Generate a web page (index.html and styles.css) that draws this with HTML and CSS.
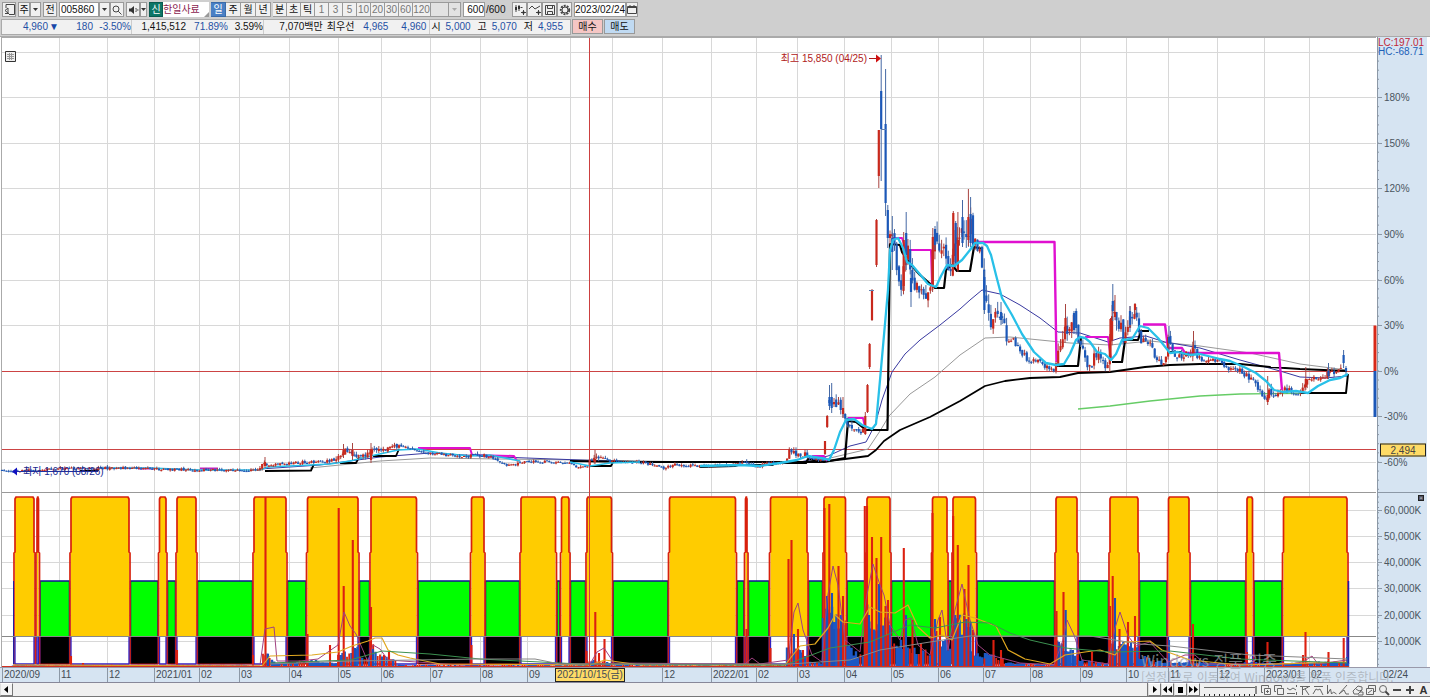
FILE: index.html
```html
<!DOCTYPE html>
<html lang="ko">
<head>
<meta charset="utf-8">
<title>한일사료 005860</title>
<link rel="stylesheet" href="styles.css">
</head>
<body>
<header class="toolbar">
  <button class="tb" aria-label="창"><svg width="11" height="11" viewBox="0 0 11 11"><path d="M2 4V.5h8.500v10H5M1 6.500l3-2.500v5zM1 9.500h4" class="ln"/></svg></button>
  <div class="group">
    <button class="tb narrow">주</button><button class="tb arrow" aria-label="주기 선택"><svg width="5" height="3" viewBox="0 0 5 3"><path d="M0 0h5L2.500 3z"/></svg></button>
  </div>
  <button class="tb">전</button>
  <div class="group code">
    <input class="code-input" value="005860" aria-label="종목코드"><button class="tb arrow" aria-label="종목 목록"><svg width="5" height="3" viewBox="0 0 5 3"><path d="M0 0h5L2.500 3z"/></svg></button><button class="tb" aria-label="검색"><svg width="10" height="10" viewBox="0 0 10 10"><circle cx="4" cy="4" r="3" class="ln"/><path d="M6.200 6.200L9.500 9.500" class="ln"/></svg></button>
  </div>
  <div class="group">
    <button class="tb" aria-label="소리"><svg width="11" height="10" viewBox="0 0 11 10"><path d="M1 3.500h2L6 1v8L3 6.500H1z"/><path d="M8 3v1M8 6v1M7.500 5h3" class="ln"/></svg></button><button class="tb arrow slim" aria-label="소리 메뉴"><svg width="5" height="3" viewBox="0 0 5 3"><path d="M0 0h5L2.500 3z"/></svg></button>
  </div>
  <div class="group stock"><span class="credit">신</span><span class="stock-name">한일사료<i class="corner"></i></span></div>
  <div class="group periods">
    <button class="tb on">일</button><button class="tb">주</button><button class="tb">월</button><button class="tb">년</button>
  </div>
  <div class="group periods short">
    <button class="tb">분</button><button class="tb">초</button><button class="tb">틱</button>
  </div>
  <div class="group mins">
    <button class="tb">1</button><button class="tb">3</button><button class="tb">5</button><button class="tb">10</button><button class="tb">20</button><button class="tb">30</button><button class="tb">60</button><button class="tb wide">120</button><button class="tb blank" aria-label="사용자 주기"></button><button class="tb arrow off" aria-label="사용자 주기 목록"><svg width="5" height="3" viewBox="0 0 5 3"><path d="M0 0h5L2.500 3z"/></svg></button>
  </div>
  <label class="count"><input class="count-input" value="600" aria-label="표시 개수"><span>/600</span></label>
  <div class="group tools">
    <button class="tb" aria-label="차트 추가"><svg width="12" height="12" viewBox="0 0 12 12"><path d="M2 1v7M5 1v6" class="ln"/><path d="M1 3h2v3H1zM4 2h2v3H4z"/><path d="M6.500 3.500h2M9.500 6v5M7 8.500h5" class="ln"/><path d="M8.500 7.500h2v2h-2z"/></svg></button><button class="tb" aria-label="지표 추가"><svg width="12" height="12" viewBox="0 0 12 12"><path d="M0 5l3-3 3 3 5-3M9.500 6v5M7 8.500h5" class="ln"/><path d="M8.500 7.500h2v2h-2z"/></svg></button><button class="tb" aria-label="저장"><svg width="12" height="12" viewBox="0 0 12 12"><path d="M1.500 1.500h9v9h-9zM3.500 1.500v3h5v-3M3.500 10.500v-3h5v3" class="ln"/></svg></button><button class="tb" aria-label="설정"><svg width="12" height="12" viewBox="0 0 12 12"><circle cx="6" cy="6" r="3" class="ln"/><circle cx="6" cy="6" r="4.200" class="gear"/></svg></button>
  </div>
  <div class="group date"><input class="date-input" value="2023/02/24" aria-label="날짜"><button class="tb cal" aria-label="달력"><svg width="10" height="9" viewBox="0 0 10 9"><path d="M.500 1.500h9v7h-9zM.500 2.500h9M3 0v2M7 0v2" class="ln"/></svg></button></div>
</header>

<section class="quote">
  <div class="cells">
    <div class="cell blue first"><span class="n5">4,960</span><span class="down">▼</span><span class="n18">180</span><span class="n19">-3.50%</span></div>
    <div class="cell"><span class="vol">1,415,512</span><span class="rate blue">71.89%</span><span class="turn">3.59%</span></div>
    <div class="cell money"><span>7,070백만</span></div>
    <div class="cell best"><span>최우선</span><span class="blue ask">4,965</span><span class="blue bid">4,960</span></div>
    <div class="cell ohl"><span>시</span><span class="blue val">5,000</span><span>고</span><span class="blue val">5,070</span><span>저</span><span class="blue val">4,955</span></div>
  </div>
  <button class="order buy">매수</button><button class="order sell">매도</button>
</section>

<main class="chart">
  <div class="plot" id="plot">
    <svg class="canvas" id="canvas" viewBox="0 37 1377 630" preserveAspectRatio="none" role="img" aria-label="한일사료 일봉 차트"></svg>
    <button class="grid-btn" aria-label="데이터 표"><svg width="11" height="11" viewBox="0 0 11 11"><path d="M.500.500h10v10h-10z" class="gridbox"/><path d="M2 3.500h7M2 5.500h7M2 7.500h7M4.500 2v7M6.500 2v7" class="gridln"/></svg></button>
    <span class="mark high" id="high">최고 15,850 (04/25)</span>
    <span class="mark low" id="low">최저 1,670 (08/26)</span>
  </div>
  <div class="yaxis" id="yaxis">
    <svg class="canvas" id="yticks" viewBox="0 37 50 630" preserveAspectRatio="none" aria-hidden="true"></svg>
    <div class="corner-info"><span class="lc">LC:197.01</span><span class="hc">HC:-68.71</span></div>
    <button class="pane-btn" aria-label="창 확대">▫</button>
  </div>
</main>

<div class="xaxis">
  <div class="months" id="months"></div>
  <div class="last-date">02/24</div>
</div>

<footer class="bottom">
  <button class="play" aria-label="왼쪽"><svg width="5" height="7" viewBox="0 0 5 7"><path d="M4 0v7L0 3.500z"/></svg></button>
  <div class="track"></div>
  <button class="play" aria-label="재생"><svg width="9" height="7" viewBox="0 0 9 7"><path d="M3 0v7l4-3.500z"/></svg></button><button class="play" aria-label="뒤로"><svg width="9" height="7" viewBox="0 0 9 7"><path d="M4 0v7L0 3.500zM9 0v7L5 3.500z"/></svg></button><button class="play" aria-label="정지"><svg width="9" height="7" viewBox="0 0 9 7"><path d="M2 1h5v6H2z"/></svg></button><button class="play" aria-label="앞으로"><svg width="9" height="7" viewBox="0 0 9 7"><path d="M0 0v7l4-3.500zM5 0v7l4-3.500z"/></svg></button>
  <input class="zoom" type="range" min="0" max="100" value="100" aria-label="확대 비율">
  <div class="icons">
    <button aria-label="창 추가"><svg viewBox="0 0 12 12"><path d="M3 8.500H1.500v-7h7v2M4.500 4.500h6v6h-6zM7.500 6v3M6 7.500h3" class="ln"/></svg></button>
    <button aria-label="창 겹치기"><svg viewBox="0 0 12 12"><path d="M3 7.500H1.500v-6h7v2M4.500 4.500h6v6h-6z" class="ln"/></svg></button>
    <button aria-label="지표"><svg viewBox="0 0 12 12"><path d="M1 4l3 2 3-2 3 2M1 9.500h8M10.500 1v2M10.500 8v3" class="ln"/></svg></button>
    <button aria-label="기준선"><svg viewBox="0 0 12 12"><path d="M1 2.500h10M3.500 2v9M3.500 6l6-3M6 5l4 6" class="ln"/></svg></button>
    <button aria-label="상단선"><svg viewBox="0 0 12 12"><path d="M2 2.500h9M1 10l3-5 2 1 2-1 3 6" class="ln"/></svg></button>
    <button aria-label="하단선"><svg viewBox="0 0 12 12"><path d="M2.500 1v9l3-5 1 5 2-2 3 2" class="ln"/></svg></button>
    <button aria-label="추세선"><svg viewBox="0 0 12 12"><path d="M1 10L9 1M1 10l5-4 2 4h3" class="ln"/></svg></button>
    <button aria-label="지우개"><svg viewBox="0 0 12 12"><path d="M1 7l5-5 4 1v3l-4 4H2zM4 5l3 2 3-1M8 8h3v3H6" class="ln"/></svg></button>
    <button aria-label="모두 지우기"><svg viewBox="0 0 12 12"><path d="M3.500 4V1.500h7v6H9M1.500 4.500h7v6h-7zM3 9l4-3" class="ln"/></svg></button>
    <button aria-label="돋보기"><svg viewBox="0 0 12 12"><circle cx="5" cy="5" r="3.500" class="ln"/><path d="M7.500 7.500L11 11" class="ln thick"/></svg></button>
    <button aria-label="축소"><svg viewBox="0 0 12 12"><path d="M2 6h8" class="ln thick"/></svg></button>
    <button aria-label="확대"><svg viewBox="0 0 12 12"><path d="M2 6h8M6 2v8" class="ln thick"/></svg></button>
    <button class="letter">A</button>
  </div>
</footer>
<div class="activate"><p class="activate-title">Windows 정품 인증</p><p class="activate-text">[설정]으로 이동하여 Windows를 정품 인증합니다.</p></div>
<script src="chart.js"></script>
</body>
</html>
```

FILE: styles.css
```css
* { box-sizing: border-box; }
body {
  margin: 0;
  height: 100vh;
  display: flex;
  flex-direction: column;
  overflow: hidden;
  background: #cfcfcf;
  color: #111;
  font: 10px/13px "Liberation Sans", "Noto Sans CJK KR", sans-serif;
}
button, input { font: inherit; color: inherit; padding: 0; margin: 0; border-radius: 0; }
p { margin: 0; }
svg { display: block; fill: #333; }
.ln { fill: none; stroke: #444; stroke-width: 1; }
.thick { stroke-width: 2; }
.gear { fill: none; stroke: #444; stroke-width: 2; stroke-dasharray: 2 1; }

.toolbar { display: flex; align-items: center; gap: 2px; height: 19px; flex: none; padding: 0 2px; }
.group { display: flex; }
.tb {
  display: flex; align-items: center; justify-content: center; flex: none;
  width: 14px; height: 15px;
  border: 1px solid #9a9a9a;
  background: #f0f0f0;
  line-height: 12px;
}
.tb.narrow { width: 12px; }
.tb.arrow { width: 11px; }
.tb.slim { width: 7px; }
.tb.cal { width: 12px; }
.tb.on { background: #4a7fc4; color: #fff; border-color: #3a6aa8; }
.code-input { width: 40px; height: 15px; border: 1px solid #9a9a9a; background: #fff; padding-left: 1px; }
.credit { width: 14px; height: 15px; background: #0d7566; color: #fff; text-align: center; line-height: 13px; border: 1px solid #0a5a50; }
.stock-name { display: flex; width: 46px; height: 15px; background: #fff; color: #8a1c50; line-height: 15px; justify-content: space-between; align-items: flex-end; white-space: nowrap; }
.corner { width: 0; height: 0; border-left: 5px solid transparent; border-bottom: 5px solid #999; }
.periods .tb { width: 15px; border-left-width: 0; }
.periods.short .tb { width: 14px; }
.mins { margin-left: -2px; }
.mins .tb { width: 14px; color: #777; border-left-width: 0; }
.mins .wide { width: 18px; }
.mins .blank { width: 18px; background: #e2e2e2; }
.mins .off { width: 12px; background: #e2e2e2; }
.mins .off svg { fill: #aaa; }
.count { display: flex; align-items: center; gap: 1px; width: 47px; }
.count-input { width: 22px; height: 15px; border: 1px solid #9a9a9a; background: #fff; text-align: right; }
.tools .tb { width: 15px; }
.date-input { width: 52px; height: 15px; border: 1px solid #9a9a9a; background: #fff; }

.quote { display: flex; align-items: center; gap: 1px; height: 18px; flex: none; padding: 0 0 2px 1px; border-bottom: 1px solid #aaa; }
.cells { display: flex; width: 570px; height: 16px; border: 1px solid #aaa; background: #f1f1f1; line-height: 14px; white-space: nowrap; }
.cell { display: flex; text-align: right; }
.blue { color: #2450a4; }
.first { width: 130px; border-right: 1px solid #ccc; }
.n5 { width: 46px; }
.down { width: 11px; color: #1746a8; }
.n18 { width: 34px; }
.n19 { width: 38px; }
.vol { width: 54px; }
.rate { width: 42px; }
.turn { width: 35px; }
.money { width: 60px; justify-content: flex-end; border-left: 1px solid #ccc; }
.best { padding-left: 4px; width: 108px; border-right: 1px solid #ccc; }
.ask { width: 34px; }
.bid { width: 38px; }
.ohl { padding-left: 1px; }
.val { width: 30px; margin-right: 7px; }
.order { width: 31px; height: 15px; border: 1px solid #999; line-height: 13px; }
.buy { background: #f5c6c4; }
.sell { background: #c0daf2; }

.chart { display: flex; flex: 1; min-height: 0; background: #fff; padding-right: 3px; }
.plot { position: relative; flex: 1; }
.canvas { position: absolute; inset: 0; width: 100%; height: 100%; }
.grid-btn { position: absolute; left: 5px; top: 14px; border: 0; background: none; }
.gridbox { fill: #eee; stroke: #333; }
.gridln { fill: none; stroke: #999; stroke-width: 1; }
.mark { position: absolute; white-space: nowrap; transform: translateY(-50%); }
.high { color: #b02020; transform: translate(-100%, -50%); }
.low { color: #202a90; }
.yaxis { position: relative; width: 50px; background: #d6e4f2; }
.ylabel { position: absolute; left: 7px; color: #4a5560; transform: translateY(-50%); }
.tag {
  position: absolute; left: 3px; right: 1px; height: 13px;
  border: 1px solid #222; background: #ffdb66; color: #444; text-align: center; line-height: 11px;
  transform: translateY(-50%);
}
.corner-info { position: absolute; left: 1px; top: 1px; display: flex; flex-direction: column; line-height: 9px; }
.lc { color: #c02838; }
.hc { color: #2060b8; }
.pane-btn { position: absolute; right: 3px; top: 458px; width: 6px; height: 6px; border: 1px solid #222; background: #556; color: #fff; font-size: 6px; line-height: 4px; }

.xaxis { display: flex; height: 16px; flex: none; background: #d6e4f2; border-top: 1px solid #99a; border-bottom: 1px solid #889; padding-right: 3px; color: #444c55; line-height: 14px; }
.months { position: relative; flex: 1; }
.month { position: absolute; top: 0; height: 14px; border-left: 1px solid #8c98a6; padding-left: 1px; }
.cursor-date { position: absolute; top: 0; width: 70px; height: 14px; border: 1px solid #222; background: #ffdb66; text-align: center; line-height: 12px; white-space: nowrap; }
.last-date { width: 50px; padding-left: 6px; }

.bottom { display: flex; align-items: center; height: 14px; flex: none; background: #efefef; border-bottom: 1px solid #777; }
.play { display: flex; align-items: center; justify-content: center; width: 13px; height: 13px; border: 1px solid #777; border-top-color: #fff; border-left-color: #ddd; background: #f4f4f4; }
.play svg { fill: #000; }
.track { flex: 1; height: 13px; border-right: 1px solid #777; background: #f0f0f0; }
.zoom {
  appearance: none; width: 53px; height: 12px; margin: 0 3px 0 4px;
  background:
    linear-gradient(#666, #666) 0 3px / 100% 1px no-repeat,
    repeating-linear-gradient(90deg, #222 0 1px, transparent 1px 5px) 0 10px / 100% 2px no-repeat;
}
.zoom::-webkit-slider-thumb { appearance: none; width: 2px; height: 8px; background: #888; }
.icons { display: flex; width: 170px; justify-content: space-between; }
.icons button { width: 13px; height: 12px; border: 0; background: none; }
.icons svg { width: 12px; height: 12px; }
.icons .ln { stroke: #666; }
.icons .thick { stroke: #444; }
.icons .letter { font: bold 11px/12px "Liberation Sans", sans-serif; color: #333; }

.activate { position: absolute; right: 36px; bottom: 12px; width: 253px; color: rgba(160, 165, 172, 0.7); pointer-events: none; white-space: nowrap; font-family: "Noto Sans CJK KR", sans-serif; }
.activate-title { font-size: 16px; line-height: 18px; }
.activate-text { font-size: 12px; line-height: 16px; }

.line { fill: none; stroke-linejoin: round; }
```

FILE: chart.js
```javascript
const NS = 'http://www.w3.org/2000/svg';
const svg = document.getElementById('canvas');
const W = 1377, TOP = 37, H = 630, BASE = 667;

function add(parent, tag, attrs) {
  const el = document.createElementNS(NS, tag);
  for (const k in attrs) el.setAttribute(k, attrs[k]);
  parent.appendChild(el);
  return el;
}
function path(d, color, width, parent = svg) {
  return add(parent, 'path', { d, stroke: color, 'stroke-width': width, class: 'line' });
}
function poly(points, color, width) {
  return add(svg, 'polyline', { points, stroke: color, 'stroke-width': width, class: 'line' });
}
let seed = 7;
function rnd() { seed = (seed * 16807) % 2147483647; return seed / 2147483647; }
function interp(pts, x) {
  for (let i = 1; i < pts.length; i++) {
    if (x <= pts[i][0]) {
      const [a, b] = [pts[i - 1], pts[i]];
      return b.map((v, k) => a[k] + (v - a[k]) * (x - a[0]) / (b[0] - a[0]));
    }
  }
  return pts[pts.length - 1];
}

/* Grid */
const months = [[2, '2020/09'], [59, '11'], [107, '12'], [154, '2021/01'], [199, '02'], [239, '03'], [289, '04'], [338, '05'], [381, '06'], [430, '07'], [480, '08'], [527, '09'], [570, ''], [612, ''], [662, '12'], [711, '2022/01'], [756, '02'], [797, '03'], [844, '04'], [891, '05'], [938, '06'], [983, '07'], [1030, '08'], [1080, '09'], [1126, '10'], [1168, '11'], [1217, '12'], [1264, '2023/01'], [1309, '02']];
const priceLabels = [[97, '180%'], [143, '150%'], [188, '120%'], [234, '90%'], [280, '60%'], [325, '30%'], [371, '0%'], [416, '-30%'], [462, '-60%']];
const volLabels = [[510, '60,000K'], [536, '50,000K'], [562, '40,000K'], [588, '30,000K'], [615, '20,000K'], [641, '10,000K']];
let grid = 'M2 52.500H1376';
months.slice(1).forEach(([x]) => { grid += `M${x + 0.5} ${TOP}V${BASE}`; });
priceLabels.concat(volLabels).forEach(([y]) => { grid += `M2 ${y + 0.5}H1376`; });
path(grid, '#d8d8d8', 1);

/* Signal zones of the lower pane */
const zones = [[15, 34], [37, 38.5], [71, 129], [159.5, 166], [177, 196], [254, 286], [307.5, 358], [371, 416.5], [471.5, 484], [521, 555.5], [561.5, 569], [587, 611.5], [669.5, 735.5], [745.5, 747], [770.5, 807], [824, 845.5], [867, 890], [932.5, 947], [953, 975.5], [1056, 1077], [1110, 1138], [1168.5, 1189], [1247, 1252.5], [1283.5, 1347]];
zones.forEach(([a, b], i) => {
  const next = zones[i + 1];
  add(svg, 'rect', { x: a, y: 497, width: b - a, height: 139, fill: '#ffcc00' });
  if (next && next[0] - b > 3.2) {
    const g1 = b + 1.5, g2 = next[0] - 1.5;
    add(svg, 'rect', { x: g1, y: 581, width: g2 - g1, height: 55, fill: '#00ff00' });
    add(svg, 'rect', { x: g1, y: 636, width: g2 - g1, height: 28, fill: '#000' });
    path(`M${g1} 664V581H${g2}V664`, '#101090', 1.5);
    path(`M${g1} 664H${g2}`, '#b01010', 1);
  }
  path(`M${a - 1} 664V553L${a} 552V499L${a + 1} 497H${b - 1}L${b} 499V552L${b + 1} 553V664`, '#d8200c', 1.7);
  path(`M${a} 636V664H${b}V636`, '#3020c0', 1.3);
});
path('M13.500 581V664', '#2020a0', 1);
path('M1348.500 581V664', '#2020a0', 1.5);
path('M2 636.500H1376', '#888', 1);

/* Volume bars: [from, to, height at start, height at end] */
const envelope = [[13, 250, 2, 2], [263, 275, 18, 6], [275, 306, 3, 6], [307, 337, 7, 3], [338, 352, 14, 12], [353, 359, 20, 17], [360, 371, 9, 8], [371, 382, 22, 12], [382, 397, 10, 6], [397, 586, 2, 2], [587, 612, 7, 5], [612, 786, 2, 2], [787, 808, 20, 12], [808, 822, 8, 3], [823, 846, 62, 40], [847, 864, 22, 8], [865, 891, 55, 42], [892, 931, 27, 13], [932, 952, 34, 18], [953, 970, 48, 44], [971, 985, 18, 11], [985, 1004, 13, 8], [1004, 1054, 4, 3], [1055, 1078, 24, 12], [1078, 1109, 7, 3], [1110, 1138, 26, 17], [1138, 1166, 11, 5], [1166, 1245, 5, 3], [1245, 1349, 4, 5]];
const bars = { red: '', blue: '' };
envelope.forEach(([a, b, h1, h2]) => {
  for (let x = a; x < b; x += 2.24) {
    const h = (h1 + (h2 - h1) * (x - a) / (b - a)) * (0.7 + rnd() * 0.5);
    bars[rnd() < (a > 820 ? 0.22 : 0.4) ? 'red' : 'blue'] += `M${x.toFixed(1)} ${BASE}v${(-Math.max(h, 1)).toFixed(1)}`;
  }
});
path(bars.blue, '#1c58c4', 2.4);
path(bars.red, '#dc2010', 1.8);
const spikes = [[71, 656, 'r'], [83, 663, 'r'], [177, 650, 'r'], [253, 655, 'r'], [265.5, 497, 'r'], [268, 654, 'b'], [307.5, 634, 'r'], [330, 645, 'r'], [338.7, 508, 'r'], [343.7, 586, 'r'], [352.8, 540, 'r'], [355, 648, 'b'], [371, 607, 'r'], [373, 649, 'b'], [384, 655, 'r'], [389, 652, 'r'], [471.5, 645, 'r'], [586.5, 651, 'r'], [595.3, 612, 'r'], [604.5, 639, 'r'], [599, 653, 'r'], [746.5, 629, 'r'], [770.5, 648, 'r'], [788.5, 559, 'r'], [791.5, 540, 'r'], [794, 634, 'b'], [798, 629, 'r'], [803, 650, 'r'], [824.5, 508, 'r'], [827, 596, 'b'], [829.3, 504, 'r'], [832, 593, 'b'], [834, 629, 'b'], [838.5, 566, 'r'], [841, 622, 'b'], [843, 596, 'r'], [864.8, 506, 'r'], [867, 506, 'r'], [869, 615, 'b'], [872, 537, 'r'], [876.5, 558, 'r'], [879, 584, 'b'], [881.2, 537, 'r'], [885.5, 606, 'r'], [888, 600, 'r'], [903.8, 548, 'r'], [906, 615, 'b'], [912.5, 620, 'r'], [921, 643, 'r'], [932.5, 513, 'r'], [935, 619, 'b'], [940, 617, 'r'], [953.2, 516, 'r'], [957.8, 545, 'r'], [964.5, 589, 'r'], [968.5, 565, 'r'], [970.5, 622, 'b'], [973, 630, 'r'], [993.5, 640, 'r'], [1001, 650, 'r'], [1056.5, 611, 'r'], [1059, 642, 'b'], [1063.5, 592, 'r'], [1065.7, 610, 'b'], [1073, 650, 'b'], [1092, 652, 'r'], [1110, 606, 'r'], [1112.7, 576, 'r'], [1115, 598, 'b'], [1119.5, 629, 'r'], [1128, 622, 'r'], [1131, 642, 'b'], [1135, 616, 'r'], [1169, 640, 'b'], [1193, 624, 'r'], [1247, 652, 'r'], [1267.5, 642, 'r'], [1305.5, 632, 'r'], [1303, 655, 'r'], [1328.5, 652, 'r'], [1343.7, 638, 'r'], [1347, 657, 'b']];
spikes.forEach(([x, y, c]) => path(`M${x} ${BASE}V${y}`, c === 'r' ? '#dc2010' : '#1c50b8', 2.1));

/* Volume averages */
poly('13,665 260,665 265,629 274,627 277,661 300,661 318,659 338,645 344,612 350,626 356,634 368,662 373,645 380,649 388,660 460,665 590,664 597,652 604,648 614,663 745,664 752,658 760,664 788,660 794,612 798,603 803,630 812,655 822,662 827,600 833,566 838,585 845,640 860,652 866,600 873,564 880,585 884,595 890,625 900,640 905,620 911,618 918,645 930,655 938,620 942,610 948,650 955,610 962,584 970,620 978,645 990,655 1020,663 1054,665 1063,640 1067,620 1074,635 1082,660 1108,664 1115,628 1120,612 1128,636 1136,646 1150,642 1168,662 1185,655 1195,655 1205,664 1290,664 1303,662 1312,656 1318,664 1347,660', '#a04080', 1);
poly('13,665 262,666 270,656 312,655 338,652 352,646 368,641 375,638 382,638 388,650 398,655 410,658 440,664 590,665 605,660 640,665 785,665 800,646 815,644 828,628 835,615 843,622 860,624 870,607 880,612 895,613 908,605 918,627 930,638 942,635 952,640 962,615 975,618 996,626 1008,650 1025,659 1050,664 1065,655 1085,652 1100,650 1115,655 1125,642 1150,641 1162,650 1190,660 1240,665 1347,662', '#e0a820', 1.2);
poly('270,663 350,660 382,651 430,654 480,659 580,664 785,665 830,648 870,642 910,625 935,628 965,622 990,623 1010,633 1030,640 1065,648 1110,652 1170,651 1240,659 1347,663', '#3c9050', 1);
poly('270,664 350,661 480,659 535,659 560,664 790,664 850,660 880,650 930,642 970,636 1090,636 1140,644 1170,646 1250,655 1347,659', '#888', 1);
path('M2 666.500H1349', '#d03020', 1);

/* Frame and guides */
path('M2 492.500H1376', '#999', 1);
path(`M1.500 ${TOP}V${BASE}`, '#aaa', 1);
add(svg, 'rect', { x: 2, y: 371, width: 1374, height: 1, fill: '#cc4444' });
add(svg, 'rect', { x: 2, y: 449, width: 1374, height: 1, fill: '#cc4444' });
path('M1375 325.500V371', '#d82818', 3);
path('M1375 371V417', '#1c58b8', 3);

/* Slow averages */
poly('1078,409 1110,406 1150,401 1200,396 1240,394 1347,393', '#66cc66', 1.3);
poly('310,468 380,461 430,458 500,459 580,460 700,462 800,462 826,459 843,455 860,451 868,449 880,431 889,416 910,394 935,377 960,355 985,338 1010,337 1040,340 1070,343 1110,345 1150,341 1200,346 1250,353 1300,364 1347,370', '#999', 1);
poly('260,469 320,465 380,457 430,453 500,457 580,460 640,462 800,462 828,456 850,446 866,442 875,425 882,400 892,372 905,354 920,340 940,325 960,309 970,300 982,290 1000,294 1020,305 1040,318 1058,332 1080,333 1108,342 1120,338 1146,336 1165,342 1200,348 1240,360 1280,371 1300,377 1325,378 1347,376', '#3838a0', 1);
poly('570,461 640,462 820,462 845,459 868,456 876,450 884,441 900,430 930,417 960,401 985,386 1005,381 1030,378 1060,377 1078,373 1110,372 1145,367 1170,365 1200,364 1240,364 1270,367 1300,369 1347,371', '#000', 1.8);

/* Step support and resistance */
poly('80,471 97,471 99,469', '#000', 2);
poly('265,471 311,470.500 314,464', '#000', 1.8);
poly('340,463 356,463 359,457', '#000', 1.8);
poly('373,456 396,456 399,449', '#000', 1.8);
poly('590,466 611,466 613,462', '#000', 1.8);
poly('700,467 735,466 738,465 772,465 776,463 806,463 808,459 824,462 845,458 848,421 856,422 866,430 887.500,430 890,244 900,245 902,252 911,265 920,275 935,288 944,288 946,270 952,265 957,271 970,271 974,247 983,249', '#000', 2.2);
poly('1056,366 1078,366 1081,337', '#000', 2.2);
poly('1112,362 1122,362 1125,340 1138,340 1141,331 1149,331', '#000', 2.2);
poly('1170,352 1180,352 1188,355', '#000', 2);
poly('1300,393 1346,393 1348,374', '#000', 2);
poly('138,468.500 154,468.500', '#c020c0', 2);
poly('200,468.500 218,468.500', '#c020c0', 2);
poly('418,448 470,448 472,455 514,456 517,461', '#e010d0', 2);
poly('812,456 824,456 827,461', '#e010d0', 2);
poly('848,418 863,418 865,427', '#e010d0', 2);
poly('893,238 902,238 906,250 931,250 932,284', '#e010d0', 2);
poly('978,242 1054.500,242 1056.500,362', '#e010d0', 2.4);
poly('1085,337 1108,337 1111,360', '#e010d0', 2);
poly('1143,324.500 1165,324.500 1168,348 1182,348 1185,353 1279,353 1282,390', '#e010d0', 2.4);
const cyan = '#28c0e8';
poly('100,468 150,468 200,470 260,470 268,467 310,465 330,464 350,461 375,455 398,450 418,449 440,453 470,456 490,455 505,458 520,461', cyan, 1.6);

/* Candles: trend control points [x, y, spread] */
const trend = [[2, 470, 1], [13, 471, 2], [60, 469, 2], [110, 468, 2], [150, 469, 2], [200, 470, 2], [255, 470.5, 2], [264, 464, 3], [275, 465, 2], [290, 463, 2], [310, 462, 2], [330, 461, 2], [338, 458, 4], [345, 452, 5], [352, 454, 4], [360, 456, 4], [370, 452, 5], [378, 449, 4], [385, 450, 3], [395, 446, 3], [405, 447, 2], [420, 452, 2], [440, 454, 2], [460, 457, 2], [480, 455, 3], [490, 457, 2], [500, 462, 2], [510, 466, 2], [520, 462, 2], [560, 462, 2], [572, 464, 2], [580, 468, 2], [587, 467, 2], [591, 459, 4], [600, 459, 4], [612, 461, 2], [640, 462, 2], [655, 465, 2], [663, 468, 2], [675, 465, 2], [700, 466, 2], [730, 465, 2], [746, 462, 3], [755, 468, 2], [765, 464, 2], [786, 462, 2], [789, 449, 5], [797, 454, 4], [806, 454, 5], [809, 458, 2], [823, 460, 2]];
const late = [[829.5, 400, 7], [835, 400, 9], [838, 406, 9], [843, 412, 7], [846, 420, 5], [852, 428, 4], [860, 434, 3], [864, 430, 5]];
const after = [[890, 238, 10], [894, 235, 11], [898, 275, 14], [901, 293, 9], [904, 262, 15], [908, 250, 16], [912, 285, 14], [917, 278, 14], [921, 292, 10], [926, 294, 9], [930, 288, 11], [934, 240, 14], [939, 252, 12], [944, 252, 14], [949, 280, 12], [953, 248, 20], [958, 250, 20], [962, 235, 15], [966, 232, 16], [971, 228, 16], [974, 243, 10], [979, 250, 9], [982, 264, 9], [984.5, 290, 16], [988, 315, 12], [992, 323, 10], [996, 315, 10], [1002, 320, 11], [1007, 338, 8], [1013, 341, 6], [1018, 345, 5], [1022, 354, 5], [1030, 361, 4], [1037, 359, 5], [1044, 366, 4], [1054, 371, 4], [1058, 354, 9], [1061, 345, 9], [1065, 322, 14], [1070, 330, 12], [1074, 322, 14], [1078, 340, 8], [1084, 355, 8], [1090, 370, 7], [1095, 352, 9], [1100, 358, 7], [1107, 369, 4], [1110, 340, 15], [1113, 306, 14], [1117, 315, 16], [1122, 335, 14], [1126, 332, 14], [1130, 320, 12], [1134, 310, 8], [1138, 323, 10], [1141, 340, 6], [1150, 343, 5], [1155, 358, 5], [1164, 365, 4], [1168, 341, 7], [1171, 345, 7], [1174, 358, 4], [1187, 354, 5], [1193, 350, 8], [1200, 358, 4], [1220, 362, 3], [1228, 368, 4], [1240, 370, 4], [1247, 377, 5], [1254, 377, 5], [1258, 390, 5], [1266, 400, 5], [1270, 391, 6], [1277, 395, 4], [1282, 388, 5], [1290, 391, 4], [1298, 395, 3], [1304, 382, 6], [1310, 379, 4], [1320, 379, 4], [1328, 373, 5], [1335, 373, 5], [1342, 368, 5]];
function candle(x, hi, top, bot, lo, c) {
  const color = c === 'r' ? '#c8281c' : '#1c58b8';
  path(`M${x} ${hi}V${lo}`, c === 'r' ? '#a84440' : '#4468a4', 1);
  path(`M${x} ${top}V${Math.max(bot, top + 1)}`, color, 2.2);
}
[trend, late, after].forEach((pts) => {
  let prev = pts[0][1];
  for (let x = pts[0][0]; x <= pts[pts.length - 1][0]; x += 2.243) {
    const [, y, s] = interp(pts, x);
    const close = y + (rnd() - 0.5) * s * 1.3;
    const top = Math.min(prev, close), bot = Math.max(prev, close);
    const f = (n) => Math.round(n * 10) / 10;
    candle(f(x), f(top - rnd() * s * 0.9), f(top), f(bot), f(bot + rnd() * s * 0.7), close < prev ? 'r' : 'b');
    prev = close + (rnd() - 0.5) * s * 0.6;
  }
});
[[343.5, 444, 450, 455, 458, 'r'], [352.5, 443, 450, 456, 460, 'r'], [371, 443, 449, 460, 463, 'r'], [265, 457, 462, 466, 468, 'r'], [595, 450, 459, 462, 464, 'r'], [825, 441, 441, 454, 455, 'r'], [827.2, 415, 416, 427, 428, 'r'], [829.5, 385, 397, 406, 410, 'b'], [831.7, 383, 397, 408, 413, 'b'], [843, 397, 408, 414, 418, 'r'], [865.3, 412, 416, 434, 435, 'r'], [867.5, 384, 385, 412, 413, 'r'], [869.6, 343, 344, 367, 369, 'r'], [872, 289, 290, 320, 321, 'r'], [876.5, 219, 220, 265, 267, 'r'], [878.8, 130, 130, 176, 188, 'r'], [881.2, 55, 91, 129, 181, 'b'], [885.6, 69, 124, 203, 216, 'b'], [887.8, 205, 210, 238, 248, 'b'], [892.3, 216, 238, 252, 270, 'b'], [903.7, 232, 240, 286, 290, 'r'], [906.2, 212, 233, 255, 270, 'b'], [911, 270, 278, 292, 307, 'b'], [932.8, 228, 237, 288, 290, 'r'], [935, 226, 229, 245, 250, 'b'], [953.3, 211, 213, 262, 266, 'r'], [955.7, 221, 223, 265, 268, 'b'], [957.9, 212, 240, 270, 272, 'r'], [962.5, 200, 217, 243, 247, 'b'], [968.4, 189, 217, 240, 246, 'r'], [970.6, 197, 214, 243, 247, 'b'], [984.4, 271, 277, 310, 314, 'b'], [1001, 302, 312, 320, 325, 'b'], [1065.5, 304, 318, 331, 334, 'r'], [1074, 311, 313, 330, 334, 'b'], [1110.5, 318, 319, 358, 360, 'r'], [1112.8, 284, 301, 311, 321, 'b'], [1115, 295, 312, 317, 320, 'r'], [1135, 303, 304, 310, 315, 'r'], [1130, 306, 311, 325, 332, 'b'], [1169, 326, 337, 343, 350, 'b'], [1193.5, 331, 349, 354, 356, 'r'], [1267.7, 376, 395, 402, 405, 'r'], [1305.8, 367, 379, 387, 390, 'r'], [1328.5, 363, 371, 376, 379, 'b'], [1343.6, 350, 355, 363, 368, 'b'], [1346, 366, 368, 371, 376, 'b']].forEach((c) => candle(...c));
path('M881 129.500H886M869 290.500H874', '#6080b0', 1);

/* Fast average */
poly('570,462 590,466 610,463 640,462', cyan, 1.5);
poly('700,466 740,465 760,466 780,463 797,460 808,456 826,459 829,460 834,450 840,432 846,420 854,419 862,425 872,429 876,424 880,380 884,335 888,290 890,250 893,240 898,238 903,248 907,262 912,265 918,272 928,284 936,287 941,276 947,265 954,266 962,260 970,250 975,243 983,243 987,246 991,255 996,275 1002,298 1012,315 1022,334 1034,352 1046,363 1056,365 1064,364 1070,354 1076,340 1080,337 1085,338 1090,342 1097,352 1105,354 1111,360 1116,354 1122,340 1132,339 1140,326 1148,328 1158,338 1170,353 1178,352 1190,355 1200,354 1220,359 1230,361 1244,367 1256,373 1266,381 1274,390 1283,392 1296,391 1308,393 1318,386 1330,380 1340,378 1348,374', cyan, 2.3);

/* Cursor and extreme markers */
add(svg, 'rect', { x: 589, y: TOP, width: 1, height: H, fill: '#cc4040' });
path('M869 58.500H877', '#b01818', 1);
add(svg, 'path', { d: 'M876 54.500L881 58.500L876 62.500Z', fill: '#d01010' });
path('M16 471.500H98', '#2030a0', 1);
add(svg, 'path', { d: 'M17 467.500L12 471.500L17 475.500Z', fill: '#1010c0' });
path('M2 37.500H1376', '#aaa', 1);

/* HTML labels share the chart's coordinates */
const pctX = (x) => (x / W * 100) + '%';
const pctY = (y) => ((y - TOP) / H * 100) + '%';
function label(parent, cls, text, pos) {
  const el = document.createElement('span');
  el.className = cls;
  el.textContent = text;
  Object.assign(el.style, pos);
  parent.appendChild(el);
}
Object.assign(document.getElementById('high').style, { left: pctX(867), top: pctY(58) });
Object.assign(document.getElementById('low').style, { left: pctX(23), top: pctY(471) });
const yaxis = document.getElementById('yaxis'), ticks = document.getElementById('yticks');
let t = `M.500 ${TOP}V${BASE}M0 492.500H50`;
for (let y = 52; y < 490; y += 9.11) t += `M0 ${y.toFixed(1)}h2`;
for (let y = 497; y < 667; y += 5.23) t += `M0 ${y.toFixed(1)}h2`;
priceLabels.concat(volLabels).forEach(([y, s]) => {
  t += `M0 ${y + 0.5}h5`;
  label(yaxis, 'ylabel', s, { top: pctY(y) });
});
path(t, '#8c98a6', 1, ticks);
label(yaxis, 'tag', '2,494', { top: pctY(450) });
const row = document.getElementById('months');
months.forEach(([x, s]) => label(row, 'month', s, { left: pctX(x) }));
label(row, 'cursor-date', '2021/10/15(금)', { left: pctX(555) });
```
